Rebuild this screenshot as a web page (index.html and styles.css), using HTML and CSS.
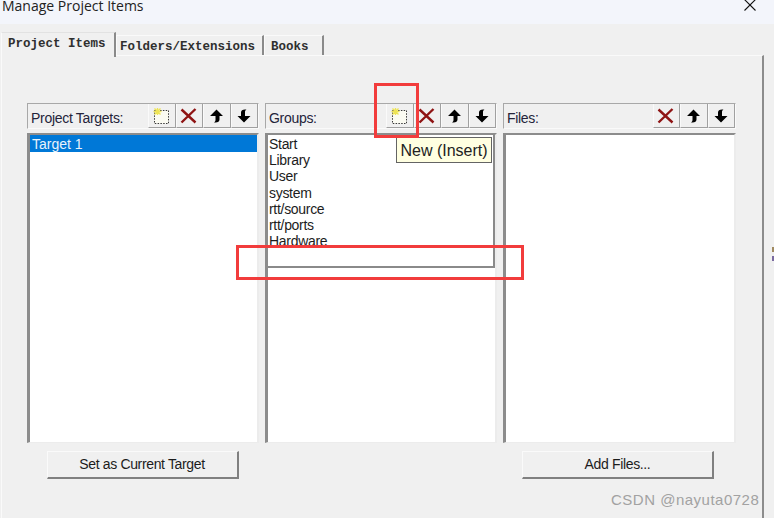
FILE: index.html
```html
<!DOCTYPE html>
<html lang="en">
<head>
<meta charset="utf-8">
<title>Manage Project Items</title>
<link rel="stylesheet" href="styles.css">
</head>
<body>
<svg class="defs" width="0" height="0" aria-hidden="true">
  <defs>
    <symbol id="i-new" viewBox="0 0 18 18">
      <rect x="1.500" y="3.500" width="14" height="13" fill="#fbfbf2" stroke="#3a3a3a" stroke-dasharray="1.500 1.300"/>
      <path d="M.5 4.500h8M4.500 1v7M1.500 1.500l6 6M7.500 1.500l-6 6" stroke="#eee455" stroke-width="1.400" fill="none"/>
    </symbol>
    <symbol id="i-del" viewBox="0 0 18 18">
      <path d="M1.500 2.500 15.500 15.500M15.500 2 1.500 15.500" stroke="#8f1414" stroke-width="2.400" fill="none"/>
    </symbol>
    <symbol id="i-up" viewBox="0 0 18 18">
      <path d="M8.500 2.500 15 9H11.500V12.500C11.500 14.500 10 15.500 7.500 15.500H6C7.500 14.500 7.500 13.500 7.500 12.500V9H2Z" fill="#000"/>
    </symbol>
    <symbol id="i-down" viewBox="0 0 18 18">
      <path d="M10 2.500H11.500C10 3.500 10 4.500 10 5.500V9H15.500L9 15.500 2.500 9H6V5.500C6 3.500 7.500 2.500 10 2.500Z" fill="#000"/>
    </symbol>
  </defs>
</svg>

<header class="titlebar">
  <span class="title">Manage Project Items</span>
  <svg class="close" width="12" height="12" viewBox="0 0 12 12"><path d="M.5 .5 11.500 11.500M11.500 .5 .5 11.500" stroke="#111" stroke-width="1.100" fill="none"/></svg>
</header>

<main class="dialog">
  <nav class="tabs">
    <span class="tab tab-active">Project Items</span>
    <span class="tab tab-mid">Folders/Extensions</span>
    <span class="tab tab-last">Books</span>
  </nav>
  <section class="panel">
    <div class="columns">
      <div class="col">
        <div class="col-head">
          <span class="col-label">Project Targets:</span>
          <div class="tools">
            <span class="tool"><svg class="ico"><use href="#i-new"/></svg></span>
            <span class="tool"><svg class="ico"><use href="#i-del"/></svg></span>
            <span class="tool"><svg class="ico"><use href="#i-up"/></svg></span>
            <span class="tool"><svg class="ico"><use href="#i-down"/></svg></span>
          </div>
        </div>
        <div class="list">
          <div class="row row-selected">Target 1</div>
        </div>
        <div class="actions"><span class="btn">Set as Current Target</span></div>
      </div>

      <div class="col">
        <div class="col-head">
          <span class="col-label">Groups:</span>
          <div class="tools">
            <span class="tool"><svg class="ico"><use href="#i-new"/></svg></span>
            <span class="tool"><svg class="ico"><use href="#i-del"/></svg></span>
            <span class="tool"><svg class="ico"><use href="#i-up"/></svg></span>
            <span class="tool"><svg class="ico"><use href="#i-down"/></svg></span>
          </div>
        </div>
        <div class="list">
          <div class="group-box">
            <div class="row">Start</div>
            <div class="row">Library</div>
            <div class="row">User</div>
            <div class="row">system</div>
            <div class="row">rtt/source</div>
            <div class="row">rtt/ports</div>
            <div class="row">Hardware</div>
          </div>
        </div>
        <div class="actions actions-empty"></div>
      </div>

      <div class="col">
        <div class="col-head">
          <span class="col-label">Files:</span>
          <div class="tools">
            <span class="tool"><svg class="ico"><use href="#i-del"/></svg></span>
            <span class="tool"><svg class="ico"><use href="#i-up"/></svg></span>
            <span class="tool"><svg class="ico"><use href="#i-down"/></svg></span>
          </div>
        </div>
        <div class="list"></div>
        <div class="actions"><span class="btn btn-files">Add Files...</span></div>
      </div>
    </div>
  </section>
</main>

<div class="tooltip">New (Insert)</div>
<div class="mark mark-tool"></div>
<div class="mark mark-row"></div>
<div class="watermark">CSDN @nayuta0728</div>
<div class="edge-dots"></div>
</body>
</html>
```
FILE: styles.css
```css
* { box-sizing: border-box; }
html, body { height: 100%; }
body {
  margin: 0;
  overflow: hidden;
  position: relative;
  background: #f0f0f0;
  color: #1c1c1c;
  font-family: "Liberation Sans", Arial, sans-serif;
  font-size: 14px;
  display: flex;
  flex-direction: column;
}
.defs { position: absolute; }

.titlebar {
  height: 24px;
  flex: none;
  background: #f3f5fb;
  display: flex;
  justify-content: space-between;
  align-items: flex-start;
  padding: 0 11px 0 2px;
}
.title {
  font-family: "Open Sans", "Liberation Sans", sans-serif;
  font-size: 14px;
  line-height: 12px;
  color: #222;
  white-space: nowrap;
}
.close { margin-top: -1px; margin-right: 7px; }

.dialog {
  flex: 1;
  min-height: 0;
  padding: 7px 10px 0 0;
  display: flex;
  flex-direction: column;
}
.tabs {
  display: flex;
  height: 24px;
  flex: none;
  padding-left: 1px;
  position: relative;
  z-index: 1;
  align-items: flex-end;
}
.tab {
  font-family: "Liberation Mono", monospace;
  font-weight: bold;
  font-size: 12.5px;
  color: #2f2f2f;
  height: 20px;
  padding-top: 2px;
  line-height: 19px;
  background: #f0f0f0;
  border-top: 1px solid #fafafa;
  border-left: 1px solid #fafafa;
  border-right: 2px solid #8a8a8a;
  white-space: nowrap;
}
.tab-active {
  width: 115px;
  height: 25px;
  padding-left: 6px;
  padding-top: 1px;
  line-height: 21px;
  margin-bottom: -2px;
  border-top-color: #e2e2e2;
}
.tab-mid { width: 148px; padding-left: 3px; }
.tab-last { width: 60px; padding-left: 6px; }

.panel {
  flex: 1;
  min-height: 0;
  margin-left: 1px;
  border-top: 1px solid #fafafa;
  border-left: 1px solid #fafafa;
  border-right: 2px solid #8c8c8c;
  padding: 47px 25px 0 25px;
}
.columns {
  display: grid;
  grid-template-columns: 232px 232px 233px;
  column-gap: 6px;
}
.col { display: flex; flex-direction: column; }
.col-head {
  height: 26px;
  display: flex;
  justify-content: space-between;
  align-items: center;
  border-top: 1px solid #a8a8a8;
  border-left: 1px solid #a8a8a8;
  border-bottom: 1px solid #fafafa;
  border-right: 1px solid #fafafa;
  padding-left: 3px;
}
.col-label {
  color: #24243a;
  font-size: 14px;
  letter-spacing: -0.3px;
  white-space: nowrap;
  padding-top: 3px;
}
.tools { display: flex; height: 100%; }
.tool {
  width: 27.500px;
  height: 100%;
  padding-top: 1px;
  display: flex;
  align-items: center;
  justify-content: center;
  background: #f0f0f0;
  border-right: 1px solid #a0a0a0;
  border-bottom: 1px solid #a0a0a0;
  border-left: 1px solid #fafafa;
}
.ico { width: 18px; height: 18px; }

.list {
  margin-top: 4px;
  height: 310px;
  background: #fff;
  border-top: 2px solid #8c8c8c;
  border-left: 3px solid #8c8c8c;
  border-right: 2px solid #ececec;
  border-bottom: 1px solid #ececec;
}
.row {
  height: 16.200px;
  line-height: 16px;
  padding-left: 1px;
  font-size: 14px;
  letter-spacing: -0.3px;
  color: #1c1c1c;
  white-space: nowrap;
}
.row-selected {
  height: 17px;
  line-height: 18px;
  padding-left: 2px;
  background: #0078d7;
  color: #e8f2fb;
  letter-spacing: 0;
}
.group-box {
  height: 133px;
  padding-top: 1px;
  border-bottom: 2px solid #8a8a8a;
  border-right: 2px solid #8a8a8a;
  overflow: hidden;
}

.actions {
  height: 28px;
  margin-top: 8px;
  display: flex;
  justify-content: center;
}
.btn {
  width: 192px;
  height: 28px;
  margin-left: -1px;
  line-height: 25px;
  text-align: center;
  font-size: 14px;
  letter-spacing: -0.35px;
  color: #1c1c1c;
  background: #f0f0f0;
  border-top: 1px solid #fafafa;
  border-left: 1px solid #fafafa;
  border-right: 2px solid #808080;
  border-bottom: 2px solid #808080;
}
.btn-files { margin-left: -3px; }

.tooltip {
  position: absolute;
  left: 396px;
  top: 137px;
  width: 96px;
  height: 26px;
  background: #ffffe1;
  border: 1px solid #646464;
  font-size: 16px;
  line-height: 25px;
  text-align: center;
  color: #222;
  white-space: nowrap;
}
.mark { position: absolute; border: 3px solid #f23c3c; }
.mark-tool { left: 374px; top: 83px; width: 45px; height: 55px; }
.mark-row { left: 236px; top: 245px; width: 288px; height: 35px; }

.watermark {
  position: absolute;
  left: 611px;
  top: 492px;
  font-size: 15px;
  line-height: 16px;
  letter-spacing: 0.5px;
  color: #a2a2a2;
  white-space: nowrap;
}
.edge-dots {
  position: absolute;
  right: 0;
  top: 247px;
  width: 2px;
  height: 14px;
  background: linear-gradient(#a08a60 0 5px, transparent 5px 9px, #7a6aa0 9px 14px);
}
```
